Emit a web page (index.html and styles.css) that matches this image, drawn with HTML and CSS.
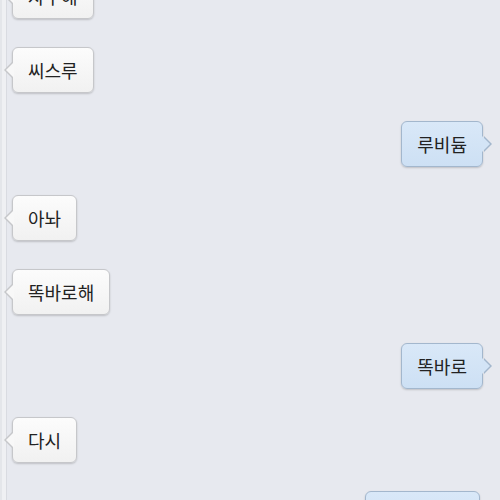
FILE: index.html
```html
<!DOCTYPE html>
<html lang="ko">

<head>
    <meta charset="UTF-8">
    <meta name="viewport" content="width=device-width, initial-scale=1.0">
    <title>chat</title>
    <link rel="stylesheet" href="styles.css">
</head>

<body>
    <main class="chat">
        <div class="row left">
            <div class="bubble">자꾸해</div>
        </div>
        <div class="row left">
            <div class="bubble">씨스루</div>
        </div>
        <div class="row right">
            <div class="bubble me">루비듐</div>
        </div>
        <div class="row left">
            <div class="bubble">아놔</div>
        </div>
        <div class="row left">
            <div class="bubble">똑바로해</div>
        </div>
        <div class="row right">
            <div class="bubble me">똑바로</div>
        </div>
        <div class="row left">
            <div class="bubble">다시</div>
        </div>
        <div class="row right">
            <div class="bubble me wide">하라고해봐</div>
        </div>
    </main>
</body>

</html>
```

FILE: styles.css
```css
* {
    box-sizing: border-box;
    margin: 0;
    padding: 0;
}

html,
body {
    height: 100%;
    overflow: hidden;
}

body {
    font-family: "Noto Sans CJK KR", "Noto Sans", sans-serif;
    color: #222;
    background: linear-gradient(to right, #e4e6ea 0, #e4e6ea 2px, #eff0f3 2px, #eff0f3 6px, #d9dbe1 6px, #d9dbe1 7px, #e7e9ef 7px);
}

.chat {
    display: flex;
    flex-direction: column;
    gap: 28px;
    margin-top: -27px;
    padding: 0 17px 0 12px;
}

.row {
    display: flex;
}

.row.right {
    justify-content: flex-end;
}

.bubble {
    position: relative;
    height: 46px;
    padding: 0 15px;
    font-size: 18px;
    line-height: 44px;
    white-space: nowrap;
    border: 1px solid #c6c7ca;
    border-radius: 6px;
    background: linear-gradient(#fcfcfc, #f1f1f1);
    box-shadow: 0 1px 2px rgba(0, 0, 0, 0.18);
}

.bubble.me {
    border-color: #a3b7cd;
    background: linear-gradient(#d9e8f8, #cde0f4);
}

.bubble.wide {
    margin-right: 3px;
}

/* tails */
.bubble::before,
.bubble::after {
    content: "";
    position: absolute;
    top: 14px;
    border: 8px solid transparent;
}

.left .bubble::before {
    left: -9px;
    border-left: 0;
    border-right-color: #c6c7ca;
}

.left .bubble::after {
    left: -7px;
    border-left: 0;
    border-right-color: #f8f8f8;
}

.right .bubble::before {
    right: -10px;
    border-right: 0;
    border-left-color: #a3b7cd;
}

.right .bubble::after {
    right: -8px;
    border-right: 0;
    border-left-color: #d3e4f6;
}
```
